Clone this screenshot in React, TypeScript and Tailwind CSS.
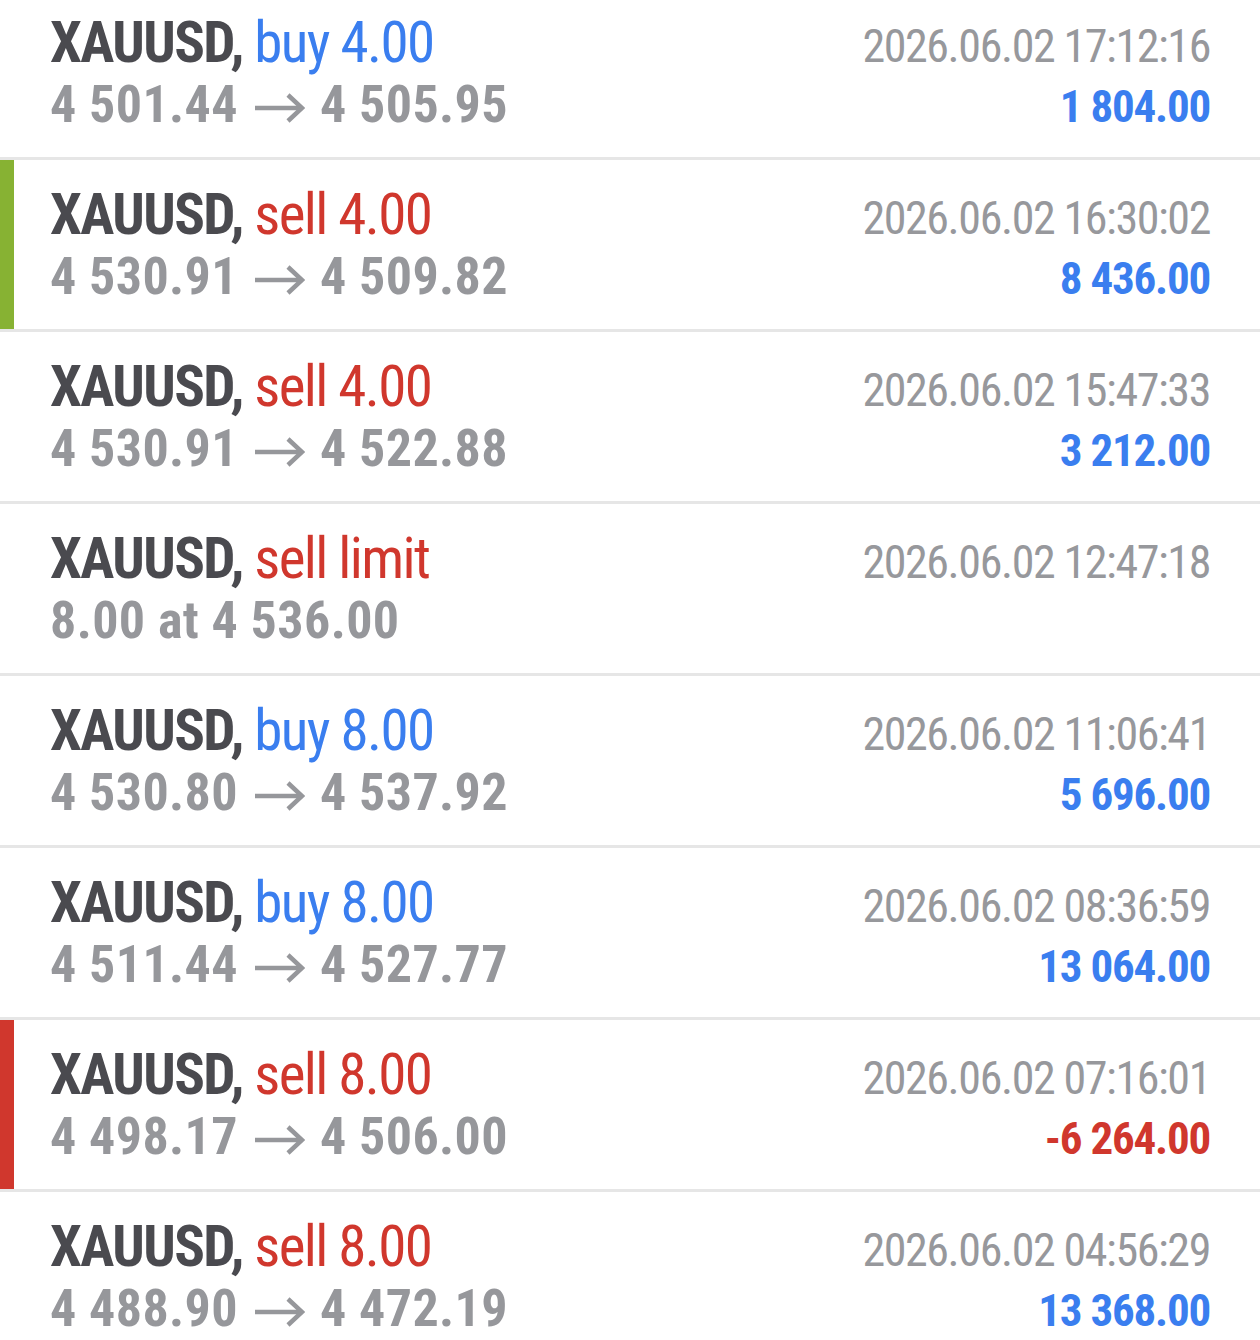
type Deal = {
  side: string;
  sideColor: 'buy' | 'sell';
  from?: string;
  to?: string;
  detail?: string;
  time: string;
  profit?: string;
  loss?: boolean;
  bar?: 'green' | 'red';
};

const deals: Deal[] = [
  { side: 'buy 4.00', sideColor: 'buy', from: '4 501.44', to: '4 505.95', time: '2026.06.02 17:12:16', profit: '1 804.00' },
  { side: 'sell 4.00', sideColor: 'sell', from: '4 530.91', to: '4 509.82', time: '2026.06.02 16:30:02', profit: '8 436.00', bar: 'green' },
  { side: 'sell 4.00', sideColor: 'sell', from: '4 530.91', to: '4 522.88', time: '2026.06.02 15:47:33', profit: '3 212.00' },
  { side: 'sell limit', sideColor: 'sell', detail: '8.00 at 4 536.00', time: '2026.06.02 12:47:18' },
  { side: 'buy 8.00', sideColor: 'buy', from: '4 530.80', to: '4 537.92', time: '2026.06.02 11:06:41', profit: '5 696.00' },
  { side: 'buy 8.00', sideColor: 'buy', from: '4 511.44', to: '4 527.77', time: '2026.06.02 08:36:59', profit: '13 064.00' },
  { side: 'sell 8.00', sideColor: 'sell', from: '4 498.17', to: '4 506.00', time: '2026.06.02 07:16:01', profit: '-6 264.00', loss: true, bar: 'red' },
  { side: 'sell 8.00', sideColor: 'sell', from: '4 488.90', to: '4 472.19', time: '2026.06.02 04:56:29', profit: '13 368.00' },
];

function Arrow() {
  return (
    <svg width="51" height="44" viewBox="0 0 51 44" className="inline-block ml-[16px] mr-[15px]" fill="none" stroke="#96979b" strokeWidth="4.5">
      <path d="M1 22H48" />
      <path d="M34 9L48 22L34 35" />
    </svg>
  );
}

function Row({ d }: { d: Deal }) {
  const bar = d.bar === 'green' ? 'bg-[#87b233]' : d.bar === 'red' ? 'bg-[#d0372d]' : 'bg-transparent';
  return (
    <div className="flex h-[172px] border-b-[3px] border-[#e6e6e6] bg-white">
      <div className={`w-[14px] shrink-0 ${bar}`} />
      <div className="flex-1 pl-[36px] pr-[50px] pt-[25px]">
        <div className="flex items-baseline justify-between">
          <div className="text-[57px] leading-[60px] tracking-[-1.6px] whitespace-nowrap">
            <span className="font-bold text-[#4a4a4f]">XAUUSD,</span>{' '}
            <span className={d.sideColor === 'buy' ? 'text-[#3a7eef]' : 'text-[#d0372d]'}>{d.side}</span>
          </div>
          <div className="text-[46px] leading-[50px] tracking-[-1.4px] text-[#97989c] whitespace-nowrap">{d.time}</div>
        </div>
        <div className="flex items-baseline justify-between">
          <div className="text-[52px] leading-[64px] tracking-[0.4px] font-bold text-[#96979b] whitespace-nowrap">
            {d.detail ? (
              d.detail
            ) : (
              <>
                {d.from}
                <Arrow />
                {d.to}
              </>
            )}
          </div>
          {d.profit && (
            <div className={`text-[45px] leading-[50px] tracking-[-1.2px] font-bold whitespace-nowrap ${d.loss ? 'text-[#d0372d]' : 'text-[#3a7eef]'}`}>
              {d.profit}
            </div>
          )}
        </div>
      </div>
    </div>
  );
}

export default function App() {
  return (
    <div className="h-[1340px] overflow-hidden bg-white" style={{ fontFamily: "'Roboto Condensed', Roboto, sans-serif" }}>
      <div className="-mt-[12px]">
        {deals.map((d, i) => (
          <Row key={i} d={d} />
        ))}
      </div>
    </div>
  );
}
